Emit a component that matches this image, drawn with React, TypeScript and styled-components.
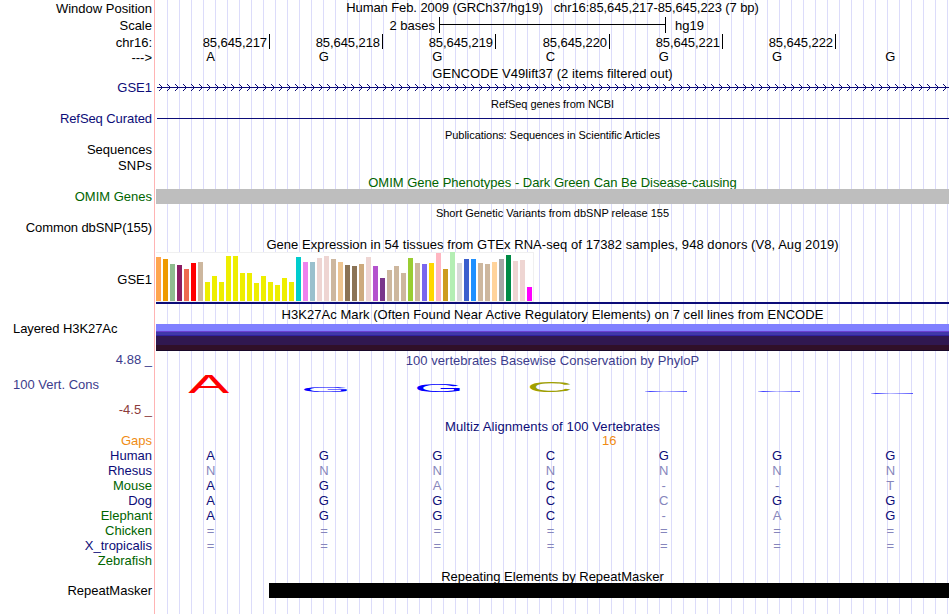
import React from "react";
import styled, { createGlobalStyle } from "styled-components";

const NAVY = "#0c0c78";
const GREEN = "#006400";
const ORANGE = "#f08c14";
const FADED = "#8686bc";

const GlobalStyle = createGlobalStyle`
  body {
    margin: 0;
    background: #fff;
    overflow: hidden;
  }
`;

const Browser = styled.div`
  display: flex;
  width: 949px;
  height: 614px;
  font-family: "Liberation Sans", Arial, sans-serif;
  font-size: 13px;
  line-height: 15px;
  color: #000;
  white-space: pre;
`;

const LabelColumn = styled.div`
  box-sizing: border-box;
  width: 155px;
  padding: 1px 2px 0 13px;
  border-right: 1px solid #ffb4b4;
  display: flex;
  flex-direction: column;
`;

const Label = styled.div<{
  $gap?: number;
  $color?: string;
  $left?: boolean;
  $spacing?: number;
}>`
  height: 15px;
  margin-top: ${(p) => p.$gap || 0}px;
  color: ${(p) => p.$color || "#000"};
  letter-spacing: ${(p) => p.$spacing || 0}px;
  text-align: ${(p) => (p.$left ? "left" : "right")};
`;

const TrackColumn = styled.div`
  width: 793px;
  margin-left: 1px;
  display: flex;
  flex-direction: column;
  background: repeating-linear-gradient(
    to right,
    transparent 0 11px,
    #dcdcfa 11px 12px
  );
`;

const Title = styled.div<{
  $gap?: number;
  $color?: string;
  $height?: number;
  $spacing?: number;
}>`
  height: ${(p) => p.$height || 15}px;
  margin-top: ${(p) => p.$gap || 0}px;
  color: ${(p) => p.$color || "#000"};
  letter-spacing: ${(p) => p.$spacing || 0}px;
  text-align: center;
`;

const SmallTitle = styled(Title)`
  height: 13px;
  font-size: 11px;
  line-height: 13px;
`;

const ScaleRow = styled.div`
  display: flex;
  align-items: center;
  height: 16px;
  margin-top: 2px;
`;

const ScaleText = styled.span<{ $width?: number }>`
  width: ${(p) => (p.$width ? `${p.$width}px` : "auto")};
  text-align: right;
`;

const ScaleBar = styled.div`
  display: flex;
  align-items: center;
  box-sizing: border-box;
  width: 227px;
  height: 16px;
  margin: 0 9px 0 4px;
  border: solid #000;
  border-width: 0 1px;

  &::before {
    content: "";
    flex: 1;
    height: 1px;
    margin-bottom: 1px;
    background: #000;
  }
`;

const PositionRow = styled.div`
  display: grid;
  grid-template-columns: 114px 113px 113px 114px 113px 113px;
  height: 15px;
  margin-top: 1px;
`;

const Position = styled.div`
  padding: 1px 2px 0 0;
  height: 14px;
  border-right: 1px solid #000;
  letter-spacing: -0.07px;
  text-align: right;
`;

const BaseRow = styled.div`
  display: grid;
  grid-template-columns: repeat(7, 1fr);
  height: 15px;
  margin: 0 2px 0 -2px;
  text-align: center;
`;

const Base = styled.span<{ $color?: string }>`
  color: ${(p) => p.$color || "#000"};
`;

const GapRow = styled.div`
  height: 15px;
  padding-left: 446px;
  color: ${ORANGE};
`;

const GeneSvg = styled.svg`
  display: block;
  flex: none;
  margin-top: 3px;
`;

const Bar = styled.div<{
  $color: string;
  $height: number;
  $gap?: number;
  $start?: number;
}>`
  flex: none;
  height: ${(p) => p.$height}px;
  margin-top: ${(p) => p.$gap || 0}px;
  margin-left: ${(p) => p.$start || 0}px;
  background: ${(p) => p.$color};
`;

const Expression = styled.div`
  box-sizing: border-box;
  display: flex;
  align-items: flex-end;
  gap: 2px;
  width: 378px;
  height: 50px;
  background: #fff;
  border: solid #f0f0f0;
  border-width: 1px 1px 1px 0;
`;

const Tissue = styled.div<{ $color: string; $height: number }>`
  width: 5px;
  height: ${(p) => p.$height}px;
  background: ${(p) => p.$color};
`;

const LogoSvg = styled.svg`
  display: block;
  flex: none;
  margin-top: 2px;
`;

const TAN = "#cdb79e";
const YELLOW = "#eeee00";
const PINK = "#eed5d2";

const tissues: [string, number][] = [
  ["#ffa54f", 44],
  ["#ee9a00", 42],
  ["#8fbc8f", 37],
  ["#8b1c62", 36],
  ["#ee6a50", 32],
  ["#ff0000", 38],
  [TAN, 39],
  [YELLOW, 19],
  [YELLOW, 25],
  [YELLOW, 19],
  [YELLOW, 45],
  [YELLOW, 45],
  [YELLOW, 28],
  [YELLOW, 28],
  [YELLOW, 18],
  [YELLOW, 25],
  [YELLOW, 19],
  [YELLOW, 16],
  [YELLOW, 23],
  [YELLOW, 19],
  ["#00cdcd", 44],
  ["#ee82ee", 39],
  ["#9ac0cd", 39],
  [PINK, 43],
  [PINK, 45],
  [TAN, 42],
  ["#eec591", 39],
  ["#8b7355", 36],
  ["#8b7355", 35],
  ["#cdaa7d", 37],
  [PINK, 44],
  ["#b452cd", 35],
  ["#7a378b", 23],
  [TAN, 31],
  [TAN, 35],
  [TAN, 28],
  ["#9acd32", 43],
  [TAN, 38],
  ["#7a67ee", 37],
  ["#ffd700", 38],
  ["#ffb6c1", 48],
  ["#cd9b1d", 32],
  ["#b4eeb4", 49],
  ["#d9d9d9", 38],
  ["#3a5fcd", 42],
  ["#1e90ff", 42],
  [TAN, 38],
  [TAN, 37],
  ["#ffd39b", 39],
  ["#a6a6a6", 42],
  ["#008b45", 46],
  [PINK, 40],
  [PINK, 41],
  ["#ff00ff", 14],
];

// colour and thickness of each H3K27Ac layer, top to bottom
const layers: [string, number][] = [
  ["#8080ff", 7],
  ["#6a40d0", 1],
  ["#4038a8", 3],
  ["#3020a0", 1],
  ["#301850", 9],
  ["#301028", 5],
  ["#180828", 1],
];

const positions = [217, 218, 219, 220, 221, 222];

const species = [
  { name: "Human", color: NAVY, bases: "AGGCGGG" },
  { name: "Rhesus", color: NAVY, bases: "NNNNNNN" },
  { name: "Mouse", color: GREEN, bases: "AGAC--T" },
  { name: "Dog", color: NAVY, bases: "AGGCCGG" },
  { name: "Elephant", color: GREEN, bases: "AGGC-AG" },
  { name: "Chicken", color: GREEN, bases: "=======" },
  { name: "X_tropicalis", color: NAVY, bases: "=======" },
  { name: "Zebrafish", color: GREEN, bases: "" },
];

const human = species[0].bases;

// letter, colour, left, width, bottom and height inside the logo
const logo: [string, string, number, number, number, number][] = [
  ["A", "#ff0000", 32.4, 40.6, 23, 18],
  ["G", "#0000ff", 148, 43, 22, 5.3],
  ["G", "#0000ff", 261, 43, 22, 8.3],
  ["C", "#a0a000", 374, 41, 22, 10.3],
];

// ink box of the capitals at 100px: left bearing, width, rise, drop
const ink: Record<string, [number, number, number, number]> = {
  A: [0.3, 66, 68.8, 0],
  G: [5, 66, 69.8, 1],
  C: [5, 64, 69.8, 1],
};

const flatMarks = [
  [489, 21],
  [602, 21],
  [715, 23],
];

const GeneLine = () => {
  let arrows = "";
  for (let x = 3; x < 792; x += 8) {
    arrows += `M${x} 0h1v1h-1zM${x + 1} 1h1v1h-1zM${x + 2} 2h1v1h-1zM${x + 3} 3h1v1h-1z`;
    arrows += `M${x + 2} 4h1v1h-1zM${x + 1} 5h1v1h-1zM${x} 6h1v1h-1z`;
  }
  return (
    <GeneSvg width="793" height="7" shapeRendering="crispEdges">
      <path d={`M1 3h792v1h-792z${arrows}`} fill={NAVY} />
    </GeneSvg>
  );
};

const ConservationLogo = () => (
  <LogoSvg width="793" height="30">
    <defs>
      <linearGradient id="flat">
        <stop offset="0" stopColor="#0000ff" stopOpacity="0.2" />
        <stop offset="0.12" stopColor="#0000ff" stopOpacity="0.75" />
        <stop offset="0.45" stopColor="#0000ff" stopOpacity="0.25" />
        <stop offset="0.8" stopColor="#0000ff" stopOpacity="0.5" />
        <stop offset="1" stopColor="#0000ff" stopOpacity="0.65" />
      </linearGradient>
    </defs>
    {logo.map(([letter, color, x, w, y, h]) => {
      const [left, width, rise, drop] = ink[letter];
      const sx = w / width;
      const sy = h / (rise + drop);
      return (
        <text
          key={x}
          transform={`translate(${x - left * sx} ${y - drop * sy}) scale(${sx} ${sy})`}
          fontSize="100"
          fill={color}
        >
          {letter}
        </text>
      );
    })}
    {flatMarks.map(([x, y]) => (
      <rect key={x} x={x} y={y} width="42" height="1" fill="url(#flat)" />
    ))}
  </LogoSvg>
);

const App: React.FC = () => {
  return (
    <>
      <GlobalStyle />
      <Browser>
        <LabelColumn>
          <Label>Window Position</Label>
          <Label $gap={2}>Scale</Label>
          <Label $gap={2}>chr16:</Label>
          <Label>{"--->"}</Label>
          <Label $gap={15} $color={NAVY}>GSE1</Label>
          <Label $gap={16} $color={NAVY} $spacing={-0.08}>RefSeq Curated</Label>
          <Label $gap={16}>Sequences</Label>
          <Label $gap={1} $spacing={0.2}>SNPs</Label>
          <Label $gap={16} $color={GREEN}>OMIM Genes</Label>
          <Label $gap={16} $spacing={-0.1}>Common dbSNP(155)</Label>
          <Label $gap={37}>GSE1</Label>
          <Label $gap={34} $spacing={-0.08} $left>Layered H3K27Ac</Label>
          <Label $gap={16} $color="#3c3c8c">4.88 _</Label>
          <Label $gap={10} $color="#3c3c8c" $left>100 Vert. Cons</Label>
          <Label $gap={10} $color="#8c3c3c">-4.5 _</Label>
          <Label $gap={16} $color={ORANGE}>Gaps</Label>
          {species.map((s) => (
            <Label key={s.name} $color={s.color}>{s.name}</Label>
          ))}
          <Label $gap={15}>RepeatMasker</Label>
        </LabelColumn>

        <TrackColumn>
          <Title $spacing={-0.09}>
            {"Human Feb. 2009 (GRCh37/hg19)   chr16:85,645,217-85,645,223 (7 bp)"}
          </Title>
          <ScaleRow>
            <ScaleText $width={279}>2 bases</ScaleText>
            <ScaleBar />
            <ScaleText>hg19</ScaleText>
          </ScaleRow>
          <PositionRow>
            {positions.map((p) => (
              <Position key={p}>85,645,{p}</Position>
            ))}
          </PositionRow>
          <BaseRow>
            {human.split("").map((b, i) => (
              <Base key={i}>{b}</Base>
            ))}
          </BaseRow>

          <Title $gap={2} $spacing={0.05}>GENCODE V49lift37 (2 items filtered out)</Title>
          <GeneLine />

          <SmallTitle $gap={7} $spacing={-0.05}>RefSeq genes from NCBI</SmallTitle>
          <Bar $gap={7} $height={1} $start={1} $color={NAVY} />

          <SmallTitle $gap={10} $spacing={-0.06}>
            Publications: Sequences in Scientific Articles
          </SmallTitle>

          <Title $gap={33} $height={14} $color={GREEN}>
            OMIM Gene Phenotypes - Dark Green Can Be Disease-causing
          </Title>
          <Bar $height={15} $color="#bebebe" />

          <SmallTitle $gap={3}>Short Genetic Variants from dbSNP release 155</SmallTitle>

          <Title $gap={17} $spacing={0.055}>
            Gene Expression in 54 tissues from GTEx RNA-seq of 17382 samples, 948 donors (V8, Aug 2019)
          </Title>
          <Expression>
            {tissues.map(([color, height], i) => (
              <Tissue key={i} $color={color} $height={height} />
            ))}
          </Expression>
          <Bar $height={2} $color={NAVY} />

          <Title $gap={3} $spacing={0.05}>
            H3K27Ac Mark (Often Found Near Active Regulatory Elements) on 7 cell lines from ENCODE
          </Title>
          {layers.map(([color, height], i) => (
            <Bar key={color} $gap={i === 0 ? 2 : 0} $height={height} $color={color} />
          ))}

          <Title $gap={2} $color="#3c3c8c" $spacing={0.03}>
            100 vertebrates Basewise Conservation by PhyloP
          </Title>
          <ConservationLogo />

          <Title $gap={19} $height={14} $color={NAVY} $spacing={0.11}>
            Multiz Alignments of 100 Vertebrates
          </Title>
          <GapRow>16</GapRow>
          {species.map((s) => (
            <BaseRow key={s.name}>
              {s.bases.split("").map((b, i) => (
                <Base key={i} $color={b === human[i] ? NAVY : FADED}>{b}</Base>
              ))}
            </BaseRow>
          ))}

          <Title $gap={1} $height={14}>Repeating Elements by RepeatMasker</Title>
          <Bar $height={15} $start={113} $color="#000" />
        </TrackColumn>
      </Browser>
    </>
  );
};

export default App;
